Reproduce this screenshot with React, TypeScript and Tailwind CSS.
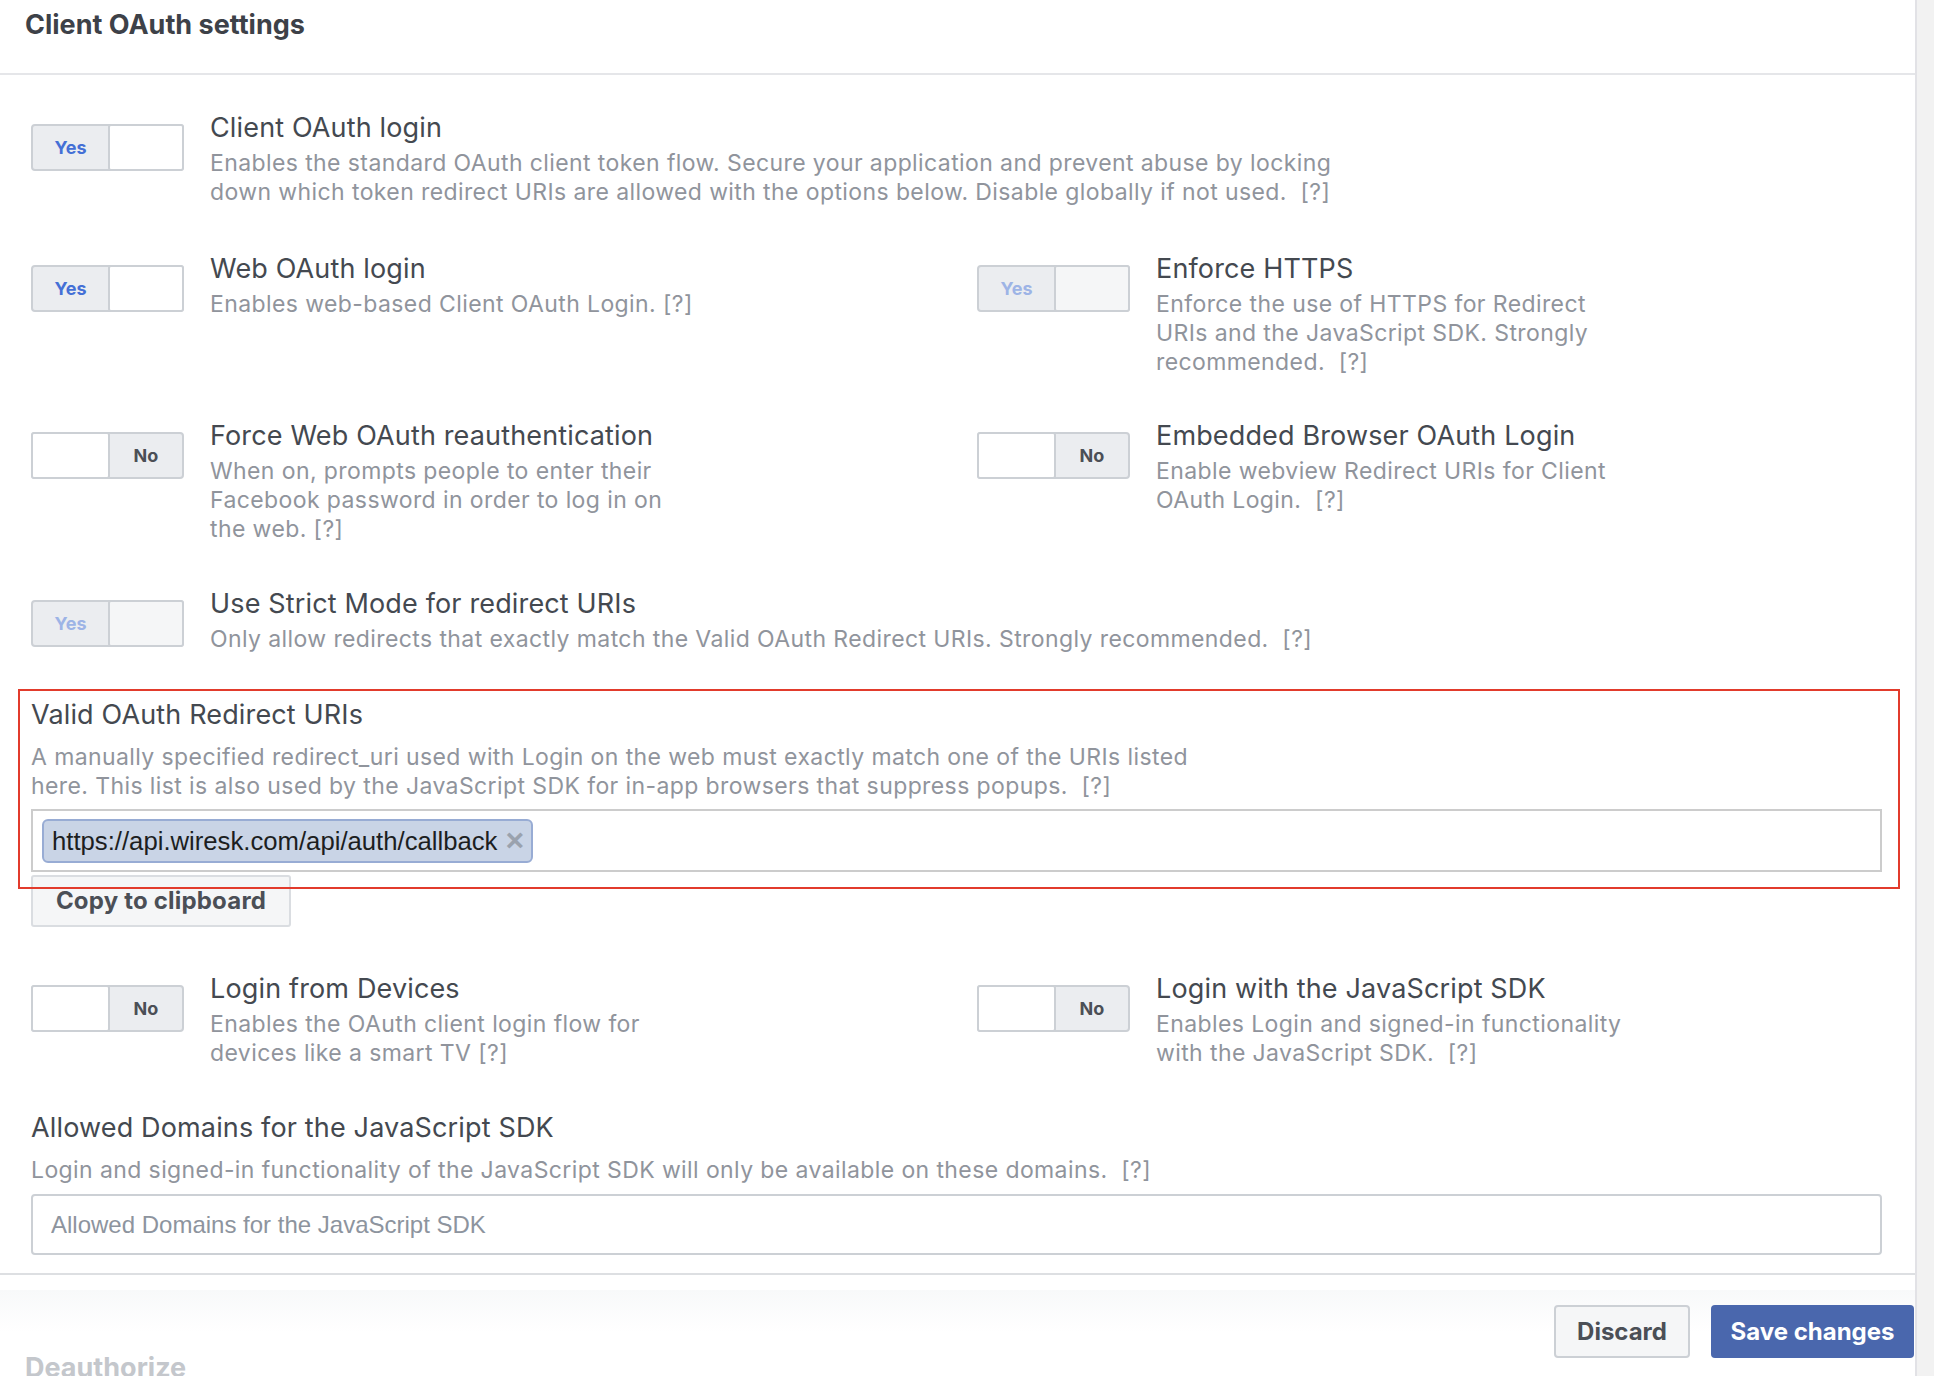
import React from 'react';

type ToggleProps = { on: boolean; disabled?: boolean };

function Toggle({ on, disabled }: ToggleProps) {
  const knobFace = (
    <div
      className={`w-full h-full rounded-[3px] border-2 border-[#ccd0d5] ${
        disabled ? 'bg-[#f5f6f7]' : 'bg-white'
      }`}
    />
  );
  return (
    <div className="w-[153px] h-[47px] shrink-0 flex rounded-[4px] border-2 border-[#ccd0d5] bg-[#ebedf0]">
      {on ? (
        <>
          <div
            className={`w-[75px] flex items-center justify-center text-[18px] font-bold ${
              disabled ? 'text-[#9db4e6]' : 'text-[#4470d6]'
            }`}
          >
            Yes
          </div>
          <div className="flex-1 h-[47px] -my-[2px] -mr-[2px]">{knobFace}</div>
        </>
      ) : (
        <>
          <div className="w-[79px] h-[47px] -my-[2px] -ml-[2px]">{knobFace}</div>
          <div className="flex-1 flex items-center justify-center text-[18px] font-bold text-[#4b4f56]">
            No
          </div>
        </>
      )}
    </div>
  );
}

type SettingProps = {
  title: string;
  lines: string[];
  on: boolean;
  disabled?: boolean;
};

function Setting({ title, lines, on, disabled }: SettingProps) {
  return (
    <div className="flex items-start gap-[26px]">
      <div className="mt-[12px]">
        <Toggle on={on} disabled={disabled} />
      </div>
      <div>
        <div className="text-[27px] leading-[32px] tracking-[0.15px] text-[#444950]">{title}</div>
        <div className="mt-[5px] text-[23px] leading-[29px] tracking-[0.4px] text-[#90949c] whitespace-pre">
          {lines.map((l, i) => (
            <div key={i}>{l}</div>
          ))}
        </div>
      </div>
    </div>
  );
}

export default function App() {
  return (
    <div className="w-full h-[1376px] overflow-hidden bg-[#f2f2f2] flex font-['Inter',sans-serif]">
      <div className="w-[1917px] shrink-0 bg-white border-r-2 border-[#e2e2e6] flex flex-col">
        {/* card */}
        <div className="border-b-2 border-[#dddfe2]">
          <div className="h-[75px] border-b-2 border-[#e5e6e9] pl-[25px] pt-[9px]">
            <h2 className="text-[27px] leading-[32px] font-bold text-[#3d4148]">
              Client OAuth settings
            </h2>
          </div>

          <div className="pl-[31px] pr-[33px] pt-[37px] pb-[18px]">
            <Setting
              on
              title="Client OAuth login"
              lines={[
                'Enables the standard OAuth client token flow. Secure your application and prevent abuse by locking',
                'down which token redirect URIs are allowed with the options below. Disable globally if not used.  [?]',
              ]}
            />

            <div className="mt-[46px] grid grid-cols-[946px_1fr]">
              <Setting
                on
                title="Web OAuth login"
                lines={['Enables web-based Client OAuth Login. [?]']}
              />
              <Setting
                on
                disabled
                title="Enforce HTTPS"
                lines={[
                  'Enforce the use of HTTPS for Redirect',
                  'URIs and the JavaScript SDK. Strongly',
                  'recommended.  [?]',
                ]}
              />
            </div>

            <div className="mt-[43px] grid grid-cols-[946px_1fr]">
              <Setting
                on={false}
                title="Force Web OAuth reauthentication"
                lines={[
                  'When on, prompts people to enter their',
                  'Facebook password in order to log in on',
                  'the web. [?]',
                ]}
              />
              <Setting
                on={false}
                title="Embedded Browser OAuth Login"
                lines={['Enable webview Redirect URIs for Client', 'OAuth Login.  [?]']}
              />
            </div>

            <div className="mt-[44px]">
              <Setting
                on
                disabled
                title="Use Strict Mode for redirect URIs"
                lines={[
                  'Only allow redirects that exactly match the Valid OAuth Redirect URIs. Strongly recommended.  [?]',
                ]}
              />
            </div>

            {/* Valid OAuth Redirect URIs */}
            <div className="relative mt-[45px]">
              <div className="text-[27px] leading-[32px] tracking-[0.15px] text-[#444950]">
                Valid OAuth Redirect URIs
              </div>
              <div className="mt-[12px] text-[23px] leading-[29px] tracking-[0.4px] text-[#90949c] whitespace-pre">
                <div>A manually specified redirect_uri used with Login on the web must exactly match one of the URIs listed</div>
                <div>here. This list is also used by the JavaScript SDK for in-app browsers that suppress popups.  [?]</div>
              </div>
              <div className="mt-[8px] h-[63px] border-2 border-[#cccccc] bg-white pl-[9px] pt-[8px]">
                <div className="inline-flex items-center h-[44px] rounded-[6px] border-2 border-[#98acd4] bg-[#c9d4e6] pl-[8px] pr-[7px] gap-[8px]">
                  <span className="font-['Liberation_Sans',Arial,sans-serif] text-[25.7px] text-[#1c1e21]">
                    https://api.wiresk.com/api/auth/callback
                  </span>
                  <span className="font-['Liberation_Sans',Arial,sans-serif] text-[32px] font-bold leading-none text-[#9aa2ae] -mt-[3px]">
                    ×
                  </span>
                </div>
              </div>
              {/* highlight annotation */}
              <div className="absolute -top-[10px] -left-[13px] -right-[18px] -bottom-[17px] border-2 border-[#e23b2c] pointer-events-none" />
            </div>

            <button className="mt-[3px] w-[260px] h-[52px] rounded-[3px] border-2 border-[#dadde1] bg-[#f5f6f7] text-[24px] tracking-[0.2px] font-bold text-[#4b4f56]">
              Copy to clipboard
            </button>

            <div className="mt-[46px] grid grid-cols-[946px_1fr]">
              <Setting
                on={false}
                title="Login from Devices"
                lines={['Enables the OAuth client login flow for', 'devices like a smart TV [?]']}
              />
              <Setting
                on={false}
                title="Login with the JavaScript SDK"
                lines={['Enables Login and signed-in functionality', 'with the JavaScript SDK.  [?]']}
              />
            </div>

            {/* Allowed Domains */}
            <div className="mt-[44px]">
              <div className="text-[27px] leading-[32px] tracking-[0.15px] text-[#444950]">
                Allowed Domains for the JavaScript SDK
              </div>
              <div className="mt-[12px] text-[23px] leading-[29px] tracking-[0.4px] text-[#90949c] whitespace-pre">
                Login and signed-in functionality of the JavaScript SDK will only be available on these domains.  [?]
              </div>
              <input
                className="mt-[9px] block w-full h-[61px] rounded-[4px] border-2 border-[#ccd0d5] pl-[18px] font-['Liberation_Sans',Arial,sans-serif] text-[24px] text-[#1c1e21] placeholder:text-[#8d949e] outline-none"
                placeholder="Allowed Domains for the JavaScript SDK"
              />
            </div>
          </div>
        </div>

        {/* sticky footer */}
        <div className="mt-[15px] bg-gradient-to-b from-[#f8f9fa] to-white to-[45%] pt-[15px] pr-[1px] flex justify-between items-start">
          <h2 className="pl-[25px] pt-[47px] text-[27px] leading-[32px] font-bold text-[#c4c7cc]">
            Deauthorize
          </h2>
          <div className="flex gap-[21px]">
            <button className="w-[136px] h-[53px] rounded-[4px] border-2 border-[#ccd0d5] bg-[#f5f6f7] text-[24px] font-bold text-[#4b4f56]">
              Discard
            </button>
            <button className="w-[203px] h-[53px] rounded-[4px] bg-[#4a67ad] text-[24px] font-bold text-white">
              Save changes
            </button>
          </div>
        </div>
      </div>
    </div>
  );
}
